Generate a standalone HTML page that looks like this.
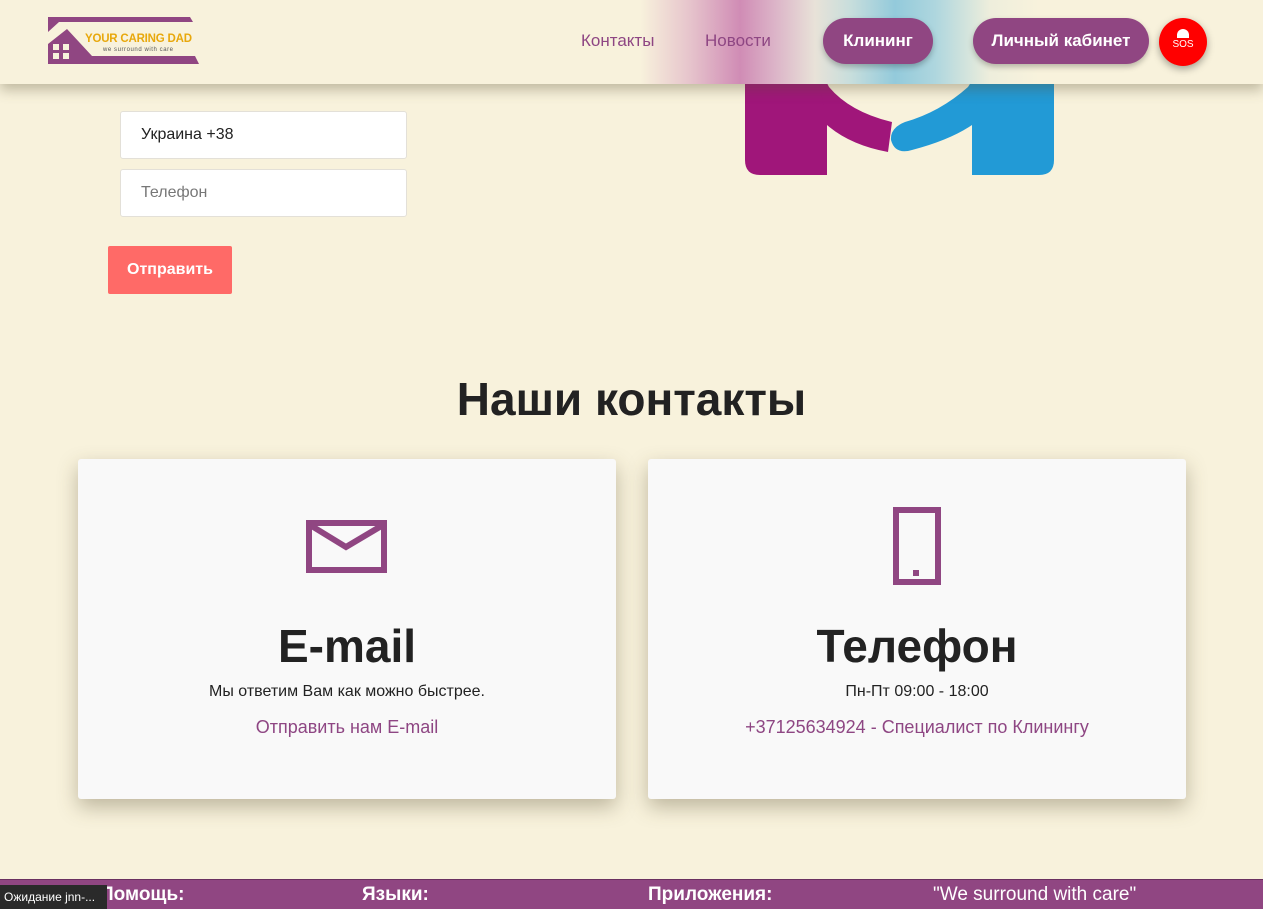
<!DOCTYPE html>
<html><head><meta charset="utf-8"><style>
*{margin:0;padding:0;box-sizing:border-box}
body{width:1263px;height:909px;overflow:hidden;background:#f8f2dc;font-family:"Liberation Sans","DejaVu Sans",sans-serif;position:relative}
.hdr{position:absolute;left:0;top:0;width:1263px;height:84px;z-index:5;
background:linear-gradient(90deg,#f8f2dc 0,#f8f2dc 640px,#e6c4cc 690px,#d08cb5 740px,#dcb4c8 775px,#e8e2d8 815px,#c8dedc 850px,#93cadb 895px,#aed6de 935px,#eeeedc 990px,#f8f2dc 1040px,#f8f2dc 1263px);
box-shadow:0 6px 12px rgba(90,80,50,.35)}
.nav{position:absolute;top:41px;transform:translateY(-50%);color:#8e4683;font-size:17px}
.btn{position:absolute;top:18px;height:46px;border-radius:23px;background:#904682;color:#fff;font-weight:bold;font-size:17px;display:flex;align-items:center;justify-content:center;box-shadow:0 3px 6px rgba(0,0,0,.25)}
.in{position:absolute;left:120px;width:287px;height:48px;background:#fff;border:1px solid #e3e0d8;border-radius:3px;font-size:16px;padding-left:20px;display:flex;align-items:center}
.card{position:absolute;top:459px;width:538px;height:340px;background:#f9f9f9;border-radius:3px;box-shadow:0 8px 20px rgba(80,70,40,.35);text-align:center}
.card h3{position:absolute;top:160px;width:100%;font-size:46px;color:#222;font-weight:bold}
.card .s{position:absolute;top:224px;width:100%;font-size:16px;color:#222}
.card .l{position:absolute;top:258px;width:100%;font-size:18px;color:#8e4683}
.ft{position:absolute;left:0;top:879px;width:1263px;height:30px;background:#904682;color:#fff;font-size:19px;font-weight:bold;border-top:1px solid #6a3060}
.ft span{position:absolute;top:4px}
</style></head><body>
<div class="hdr">
<svg style="position:absolute;left:47px;top:16px" width="153" height="50" viewBox="0 0 153 50">
<path d="M1 1H143L146 6H12L1 16Z" fill="#904682"/>
<path d="M1 48V28L20 13L45 40H148L152 48Z" fill="#904682"/>
<rect x="6" y="28" width="6" height="6" fill="#f8f2dc"/><rect x="16" y="28" width="6" height="6" fill="#f8f2dc"/>
<rect x="6" y="37" width="6" height="6" fill="#f8f2dc"/><rect x="16" y="37" width="6" height="6" fill="#f8f2dc"/>
<text x="38" y="26" font-family="Liberation Sans" font-weight="bold" font-size="11.5" fill="#e8a80c" textLength="107">YOUR CARING DAD</text>
<text x="56" y="35" font-family="Liberation Sans" font-size="6" fill="#555" textLength="70">we surround with care</text>
</svg>
<div class="nav" style="left:581px">Контакты</div>
<div class="nav" style="left:705px">Новости</div>
<div class="btn" style="left:823px;width:110px">Клининг</div>
<div class="btn" style="left:973px;width:176px">Личный кабинет</div>
<div style="position:absolute;left:1159px;top:18px;width:48px;height:48px;border-radius:50%;background:#f00;box-shadow:0 3px 8px rgba(0,0,0,.35);color:#fff;font-size:10px;text-align:center">
<div style="margin:11px auto 0;width:12px;height:9px;background:#fff;border-radius:6px 6px 0 0"></div><div style="margin-top:1px">SOS</div></div>
</div>
<svg style="position:absolute;left:740px;top:60px" width="320" height="120" viewBox="740 60 320 120">
<path d="M745 60H827V175H760Q745 175 745 160Z" fill="#a0167a"/>
<path d="M815 60L829 87Q850 112 892 122L888 152Q850 145 827 125Z" fill="#a0167a"/>
<path d="M972 60H1054V160Q1054 175 1039 175H972Z" fill="#229ad6"/>
<path d="M985 60L968 87Q940 112 905 122Q890 128 891 140Q895 155 912 150Q950 140 972 125Z" fill="#229ad6"/>
</svg>
<div class="in" style="top:111px;color:#222">Украина +38</div>
<div class="in" style="top:169px;color:#777">Телефон</div>
<div style="position:absolute;left:108px;top:246px;width:124px;height:48px;background:#ff6a67;border-radius:2px;color:#fff;font-weight:bold;font-size:16px;display:flex;align-items:center;justify-content:center">Отправить</div>
<div style="position:absolute;top:372px;width:1263px;text-align:center;font-size:46px;font-weight:bold;color:#222">Наши контакты</div>
<div class="card" style="left:78px">
<svg style="position:absolute;left:228px;top:61px" width="81" height="53"><rect x="3" y="3" width="75" height="47" fill="none" stroke="#904682" stroke-width="6"/><path d="M4 5L40 27L77 5" fill="none" stroke="#904682" stroke-width="6"/></svg>
<h3>E-mail</h3><div class="s">Мы ответим Вам как можно быстрее.</div><div class="l">Отправить нам E-mail</div></div>
<div class="card" style="left:648px">
<svg style="position:absolute;left:245px;top:48px" width="48" height="78"><rect x="3" y="3" width="42" height="72" fill="none" stroke="#904682" stroke-width="6"/><rect x="20" y="63" width="6" height="6" fill="#904682"/></svg>
<h3>Телефон</h3><div class="s">Пн-Пт 09:00 - 18:00</div><div class="l">+37125634924 - Специалист по Клинингу</div></div>
<div class="ft"><span style="left:100px">Помощь:</span><span style="left:362px">Языки:</span><span style="left:648px">Приложения:</span><span style="left:933px;font-weight:normal">"We surround with care"</span></div>
<div style="position:absolute;left:0;top:885px;width:107px;height:24px;background:#2a2a2a;color:#fff;font-size:12px;padding:5px 4px;z-index:6">Ожидание jnn-...</div>
</body></html>
